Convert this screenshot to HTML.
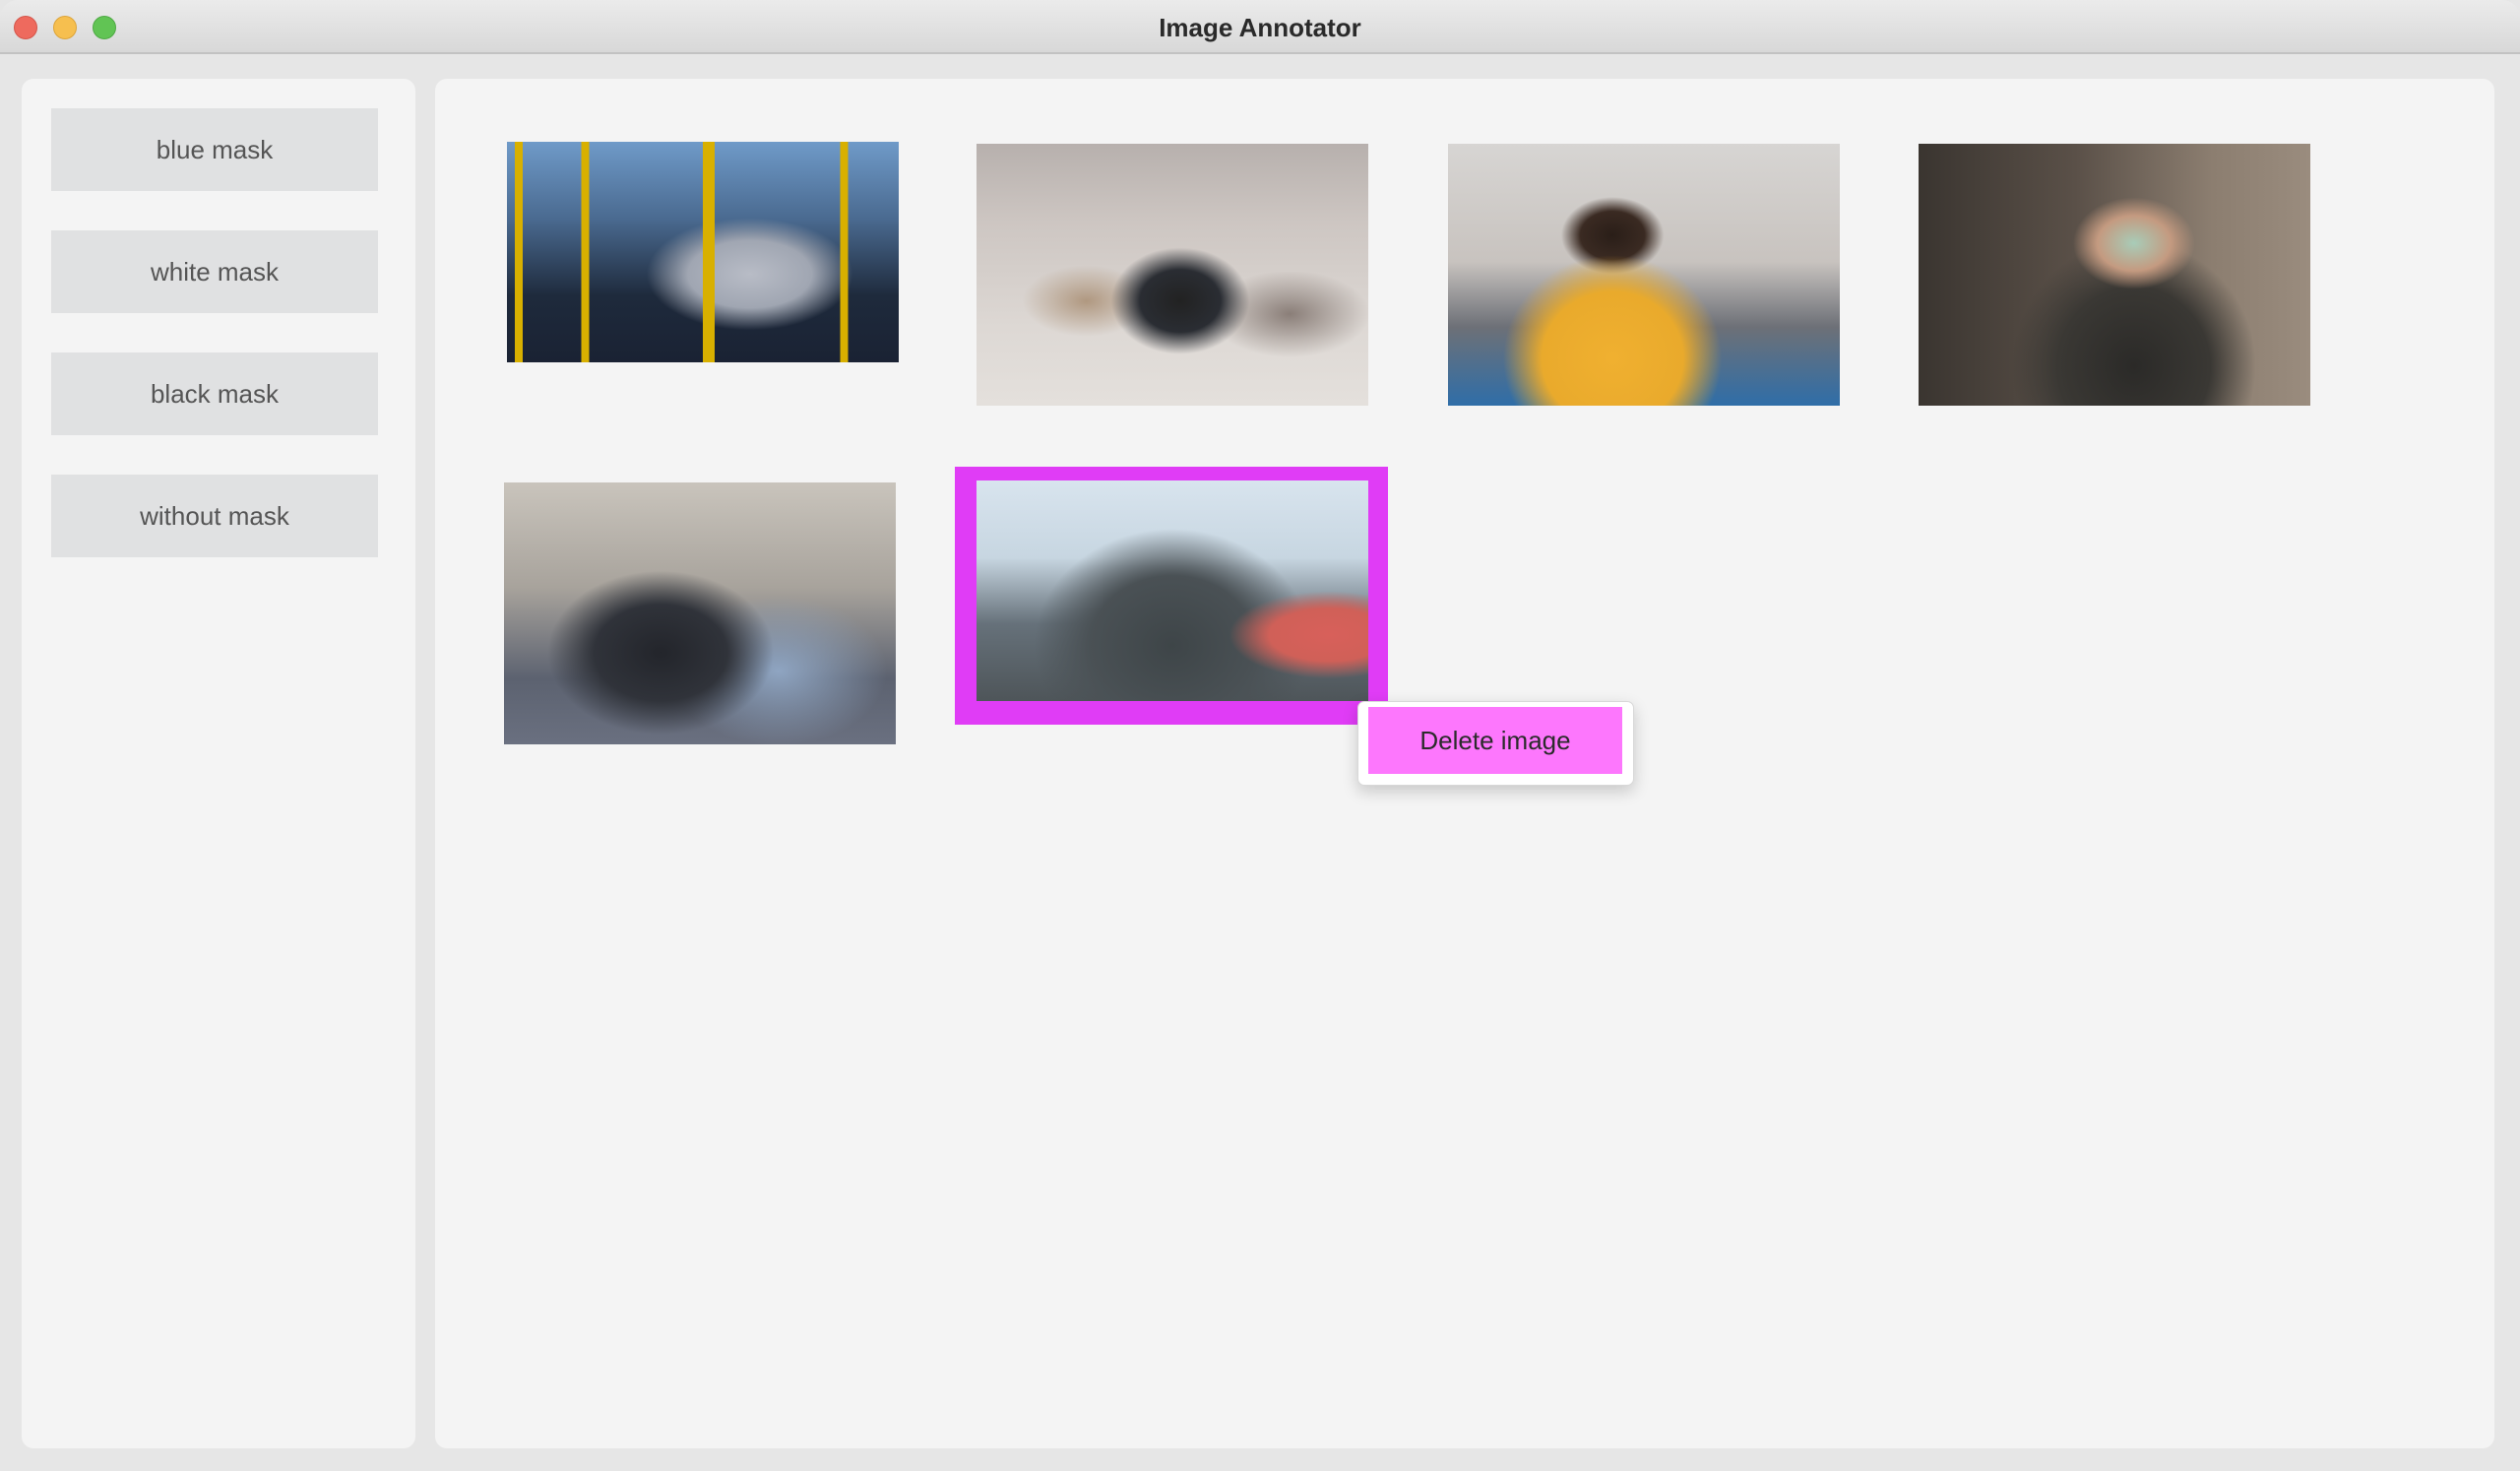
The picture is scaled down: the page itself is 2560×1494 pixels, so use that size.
<!DOCTYPE html>
<html><head><style>
*{margin:0;padding:0;box-sizing:border-box}
body{width:2560px;height:1494px;background:#e6e6e6;font-family:"Liberation Sans",sans-serif;position:relative;overflow:hidden}
.title{position:absolute;left:0;top:0;width:2560px;height:55px;background:linear-gradient(#ebebeb,#d8d8d8);border-bottom:2px solid #c2c2c2;border-radius:18px 18px 0 0}
.title span{position:absolute;left:0;right:0;top:13px;text-align:center;font-weight:bold;font-size:26px;color:#2a2a2a}
.dot{position:absolute;top:16px;width:24px;height:24px;border-radius:50%}
.panel{position:absolute;background:#f4f4f4;border-radius:12px}
.btn{position:absolute;left:52px;width:332px;height:84px;background:#e0e1e2;color:#555;font-size:26px;text-align:center;line-height:84px}
.img{position:absolute;width:398px}
</style></head><body>
<div class="title"><span>Image Annotator</span>
<div class="dot" style="left:14px;background:#ee6a5e;border:1px solid #d4554a"></div>
<div class="dot" style="left:54px;background:#f6bf4f;border:1px solid #dca43a"></div>
<div class="dot" style="left:94px;background:#61c454;border:1px solid #4ea944"></div>
</div>
<div class="panel" style="left:22px;top:80px;width:400px;height:1391px"></div>
<div class="panel" style="left:442px;top:80px;width:2092px;height:1391px"></div>
<div class="btn" style="top:110px">blue mask</div>
<div class="btn" style="top:234px">white mask</div>
<div class="btn" style="top:358px">black mask</div>
<div class="btn" style="top:482px">without mask</div>

<div class="img" style="left:515px;top:144px;height:224px;background:
linear-gradient(90deg,transparent 2%,#d8b000 2%,#d8b000 4%,transparent 4%,transparent 19%,#d8b000 19%,#d8b000 21%,transparent 21%,transparent 50%,#d8b000 50%,#d8b000 53%,transparent 53%,transparent 85%,#d8b000 85%,#d8b000 87%,transparent 87%),
radial-gradient(ellipse at 62% 60%,#b8bcc6 0,#a0a6b2 18%,transparent 30%),
linear-gradient(180deg,#6f9ac8 0,#4a6a90 35%,#1e2a3c 70%,#1a2233 100%)"></div>
<div class="img" style="left:992px;top:146px;height:266px;background:
radial-gradient(ellipse at 52% 60%,#222 0,#2a2d33 14%,transparent 24%),
radial-gradient(ellipse at 80% 65%,#8a7e78 0,transparent 18%),
radial-gradient(ellipse at 28% 60%,#b09880 0,transparent 16%),
linear-gradient(180deg,#b7b0ad 0,#cdc6c2 30%,#ddd8d4 70%,#e4e0dc 100%)"></div>
<div class="img" style="left:1471px;top:146px;height:266px;background:
radial-gradient(ellipse at 42% 82%,#f0b030 0,#e9aa2c 22%,transparent 34%),
radial-gradient(ellipse at 42% 35%,#2a1e18 0,#3a2a22 10%,transparent 16%),
linear-gradient(180deg,#d7d5d3 0,#c8c3bf 45%,#6d7077 70%,#2f6ea8 100%)"></div>
<div class="img" style="left:1949px;top:146px;height:266px;background:
radial-gradient(ellipse at 55% 38%,#a8ccb8 0,#c49a80 12%,transparent 20%),
radial-gradient(ellipse at 55% 85%,#2b2a28 0,#3a3834 25%,transparent 40%),
linear-gradient(90deg,#3a3530 0,#5a5048 40%,#8c7e70 75%,#9a8c7e 100%)"></div>
<div class="img" style="left:512px;top:490px;height:266px;background:
radial-gradient(ellipse at 40% 65%,#23252b 0,#30333a 20%,transparent 34%),
radial-gradient(ellipse at 70% 72%,#8fa5c2 0,transparent 28%),
linear-gradient(180deg,#c9c4bc 0,#a8a39c 40%,#5c6270 75%,#6a7080 100%)"></div>

<div style="position:absolute;left:970px;top:474px;width:440px;height:262px;background:#e03cf6"></div>
<div class="img" style="left:992px;top:488px;height:224px;background:
radial-gradient(ellipse at 90% 70%,#d8605a 0,#d06058 12%,transparent 20%),
radial-gradient(ellipse at 50% 75%,#3e4548 0,#4a5155 30%,transparent 50%),
linear-gradient(180deg,#d8e4ee 0,#c7d6e1 35%,#66717a 65%,#4e5559 100%)"></div>

<div style="position:absolute;left:1379px;top:712px;width:281px;height:86px;background:#fff;border:1px solid #d8d8d8;border-radius:7px;box-shadow:0 6px 16px rgba(0,0,0,.18)"></div>
<div style="position:absolute;left:1390px;top:718px;width:258px;height:68px;background:#fd77fd;color:#2b2b2b;font-size:26px;line-height:68px;text-align:center">Delete image</div>
</body></html>
